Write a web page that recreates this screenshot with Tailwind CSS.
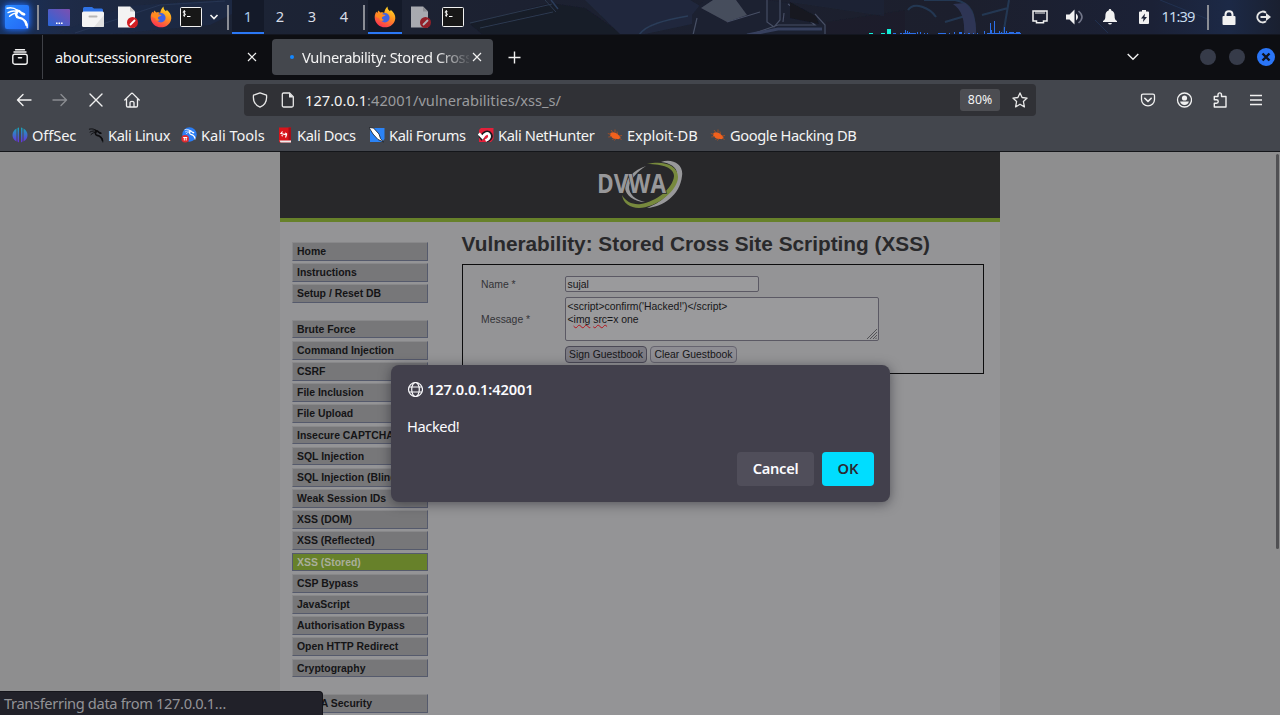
<!DOCTYPE html>
<html lang="en">
<head>
<meta charset="utf-8">
<title>Vulnerability: Stored Cross Site Scripting (XSS)</title>
<script src="https://cdn.jsdelivr.net/npm/@tailwindcss/browser@4"></script>
</head>
<body class="w-[1280px] h-[715px] overflow-hidden bg-[#8e8e8f] font-['Noto_Sans',sans-serif] text-[14.67px] text-[#f4f4f4]">
<svg class="absolute w-0 h-0">
  <defs>
    <linearGradient id="gk" x1="0" y1="0" x2="1" y2="1"><stop offset="0" stop-color="#2a8bff"/><stop offset="1" stop-color="#2467f5"/></linearGradient>
    <linearGradient id="gd" x1="0" y1="1" x2="1" y2="0"><stop offset="0" stop-color="#2a66d8"/><stop offset="1" stop-color="#7d4fb0"/></linearGradient>
    <linearGradient id="gf" x1="0.8" y1="0" x2="0.3" y2="1"><stop offset="0" stop-color="#ffe226"/><stop offset=".45" stop-color="#ff9421"/><stop offset="1" stop-color="#fb2f52"/></linearGradient>
    <linearGradient id="go" x1="0" y1="0" x2="0" y2="1"><stop offset="0" stop-color="#16a8b8"/><stop offset="1" stop-color="#6a2ee0"/></linearGradient>
    <symbol id="dragon" viewBox="0 0 24 24">
      <g fill="none" stroke="currentColor" stroke-linecap="round" stroke-linejoin="round">
        <path stroke-width="1.400" d="M2 3.200C6 2.200 9.500 3 12.500 5.200M3 7.600C6 5.800 9 5.600 12 6.400M4.500 11.300C7 8.800 9.500 8 12.200 8"/>
        <path stroke-width="2.400" d="M11.500 5.400C13.500 5.500 15 6.300 16.200 7.900L19.200 9.300M12.600 6.300C10.400 8.600 10.600 11.800 13.700 12.600C17.500 13.400 20.500 14.500 21.500 20"/>
        <path stroke-width="1.300" d="M19.500 9.500L17.500 9.600L16.500 8.700M20 15.500C22 17 22.300 19.500 22.200 22.500"/>
      </g>
    </symbol>
    <symbol id="fox" viewBox="0 0 22 22">
      <path fill="url(#gf)" d="M13.600.5C13.300 2.800 14.400 4 16 5.200C16.500 4.800 16.700 4.200 16.700 3.700C19.800 6.200 21.500 9 21.300 12.200C20.900 17.600 16.500 21.300 11 21.300C5.200 21.300 1 17 .7 11.700C.6 9.500 1.200 7.300 2.400 5.700L3.400 7L4.200 4.400L6.400 6.600C8 6 9.200 6.200 10.200 6.900C10.600 4.200 11.800 1.800 13.600.5Z"/>
      <circle cx="10.900" cy="11.800" r="4.700" fill="#3e62e6"/>
      <path fill="#ff8a1f" d="M1 9.800C3.300 6.900 6 6.700 8.500 8.200L11.600 8.900C11.200 10.300 8.500 10 8 11.500C7.500 13 9 13.800 10.300 13.800C8.200 16 5.500 14.500 5.200 12C3.800 11.700 2.200 11 1 9.800Z"/>
    </symbol>
    <symbol id="doc" viewBox="0 0 22 24">
      <path fill="#f3f3f3" d="M1 1.500H13L18 6.500V22.500H1Z"/><path fill="#c9c9c9" d="M13 1.500L18 6.500H13Z"/>
      <circle cx="15.500" cy="17.500" r="5.500" fill="#d21f24"/><path d="M13 20L18 15" stroke="#fff" stroke-width="1.800"/>
    </symbol>
    <symbol id="term" viewBox="0 0 22 20">
      <rect x=".5" y=".5" width="21" height="19" rx="1" fill="#171717" stroke="#f2f2f2"/>
      <path d="M5.500 4.700C4.500 3.800 3 4.200 3.200 5.300C3.400 6.300 5.400 6 5.400 7.500C5.400 8.600 3.800 8.700 3 8M4.300 3.200V9.800M7 9.500H10.500" fill="none" stroke="#fff" stroke-width="1"/>
    </symbol>
    <symbol id="bug" viewBox="0 0 16 16">
      <path fill="#f2611d" d="M3.500 6C5.500 4.500 8.500 5 11 7.500L13.500 10C13.500 11.500 12 12.500 10 12C7 12.500 4.500 10.500 3 8.300Z"/>
      <path fill="none" stroke="#b4501f" stroke-width=".8" d="M.8 6.500L4 7.500M1.300 10L5 9.500M4 3L6 5.500M8 2.500L8 5M10 4.500L10.500 7M15 8.500L12 9M14.500 12.500L12 11M7 11L5.500 13M9 11.500L7.500 13.500"/>
    </symbol>
  </defs>
</svg>

<!-- Desktop panel -->
<header class="relative h-[35px] bg-[#1c2233] overflow-hidden">
  <svg class="absolute inset-0" width="1280" height="35" viewBox="0 0 1280 35" fill="none">
    <defs>
      <linearGradient id="wall"><stop offset="0" stop-color="#17305c"/><stop offset=".05" stop-color="#1e2b48"/><stop offset=".16" stop-color="#1c2436"/><stop offset=".4" stop-color="#1c2131"/><stop offset=".75" stop-color="#1c1f2d"/><stop offset=".9" stop-color="#1b2136"/><stop offset=".96" stop-color="#1c2946"/><stop offset="1" stop-color="#1a2030"/></linearGradient>
      <filter id="soft" x="0" y="-1" width="1" height="3"><feGaussianBlur stdDeviation=".7"/></filter>
    </defs>
    <rect width="1280" height="35" fill="url(#wall)"/>
    <g filter="url(#soft)" opacity=".75">
      <path d="M60 32L128 6L220 0H260L210 25L100 35Z" fill="#1d2a47"/><path d="M75 33L160 5L225 1" stroke="#2b3b5c"/>
      <path d="M470 24L550 3L585 8L622 34H482Z" fill="#151a26"/><path d="M470 23L552 4M480 28L553 12M545 0L556 12" stroke="#33435a"/>
      <path d="M585 0L620 34H645L720 18L690 0Z" fill="#212b42"/><path d="M551 0L558 9M639 35C645 25 665 20 688 16" stroke="#304667" stroke-width="1.500"/>
      <path d="M692 15L704 0H765L790 3L812 15L826 25V35H692Z" fill="#1b2032"/>
      <path d="M701 8L713 0H736L747 15L727 22Z" fill="#555c6c"/><path d="M727 22L760 12M767 0V22L774 27L780 20V0M783 22L784 13M755 33L778 25H815L788 4M815 14L825 25V35M693 35L697 18" stroke="#565f76" stroke-width="1.200"/>
      <path d="M790 2L816 16L819 24L790 18Z" fill="#12151f"/><path d="M747 35L778 29H822" stroke="#3f4c6e" stroke-width="3"/>
      <path d="M826 22L905 10V35H826Z" fill="#1a1d2a"/><path d="M884 0H790V2L884 16Z" fill="#1e2a3e" opacity=".6"/>
      <path d="M908 10C914 1 930 8 936 17M924 0H955C972 3 976 15 974 35M945 22L972 14M982 15L1008 8M1009 0L1003 35" stroke="#27405f" stroke-width="2"/>
      <path d="M953 4C962 10 965 20 964 35H976C977 20 972 8 965 3Z" fill="#343e63"/><path d="M1095 20L1108 33M1160 0L1210 20" stroke="#223658"/>
    </g>
    <g shape-rendering="crispEdges">
      <path fill="#12f1d8" d="M869 33h4v1h-4zM881 33h4v1h-4zM887 29h4v5h-4z"/>
      <path fill="#2b6fe8" d="M893 33h3v1h-3zM900 33h2v1h-2zM903 33h13v1h-13zM905 30h1v4h-1zM907 31h1v3h-1zM909 32h1v2h-1zM917 32h1v2h-1zM920 32h1v2h-1zM924 33h1v1h-1zM927 33h1v1h-1zM938 33h8v1h-8zM949 33h1v1h-1zM954 32h1v2h-1zM959 32h3v2h-3zM964 33h1v1h-1zM968 33h2v1h-2zM973 33h1v1h-1zM977 33h1v1h-1zM984 31h1v3h-1zM987 33h34v1h-34zM990 23h1v11h-1zM991 30h1v4h-1zM994 21h1v13h-1zM999 31h1v3h-1zM1001 32h1v2h-1zM1004 27h1v7h-1zM1006 31h1v3h-1zM1009 32h5v2h-5zM1016 32h4v2h-4z"/>
    </g>
    <path d="M0 34.500H1280" stroke="#131620"/>
  </svg>
  <div class="relative h-[34px] flex items-center">
    <div class="w-[34px] flex justify-center"><div class="w-6 h-6 rounded-sm shadow-[0_0_6px_1px_#2070ff]"><svg width="24" height="24"><rect width="24" height="24" rx="2" fill="url(#gk)"/><use href="#dragon" width="24" height="24" color="#fff"/></svg></div></div>
    <div class="w-2 flex justify-center"><i class="w-0.5 h-[25px] bg-[#8a8d95]"></i></div>
    <div class="w-[34px] flex justify-center"><svg width="22" height="17" viewBox="0 0 22 17"><rect width="22" height="17" rx="1" fill="url(#gd)"/><path fill="#fff" d="M8 13.500h1.600v1.600H8zM10.500 13.500h1.600v1.600h-1.600zM13 13.500h1.600v1.600H13z"/></svg></div>
    <div class="w-[34px] flex justify-center"><svg width="22" height="20" viewBox="0 0 22 20"><path d="M1 5V1.500Q1 0 2.500 0H10L12 1.500H19.500Q21 1.500 21 3V6H1Z" fill="#2f72e4"/><rect y="4.500" width="22" height="15.500" rx="1.500" fill="#f4f4f4"/><path d="M22 8V19Q22 20 20.500 20H12Z" fill="#e0e0e0"/><rect x="6.500" y="8.500" width="9" height="2" rx="1" fill="#b5b5b5"/></svg></div>
    <div class="w-[34px] flex justify-center pl-0.5"><svg width="22" height="24"><use href="#doc"/></svg></div>
    <div class="w-[34px] flex justify-center"><svg width="22" height="22"><use href="#fox"/></svg></div>
    <div class="w-[26px] flex justify-center"><svg width="22" height="20"><use href="#term"/></svg></div>
    <div class="w-5 flex justify-center"><svg width="10" height="6" viewBox="0 0 10 6"><path d="M1.500 1L5 4.500L8.500 1" fill="none" stroke="#f4f4f4" stroke-width="1.600"/></svg></div>
    <div class="w-2 flex justify-center"><i class="w-0.5 h-[25px] bg-[#8a8d95]"></i></div>
    <div class="w-8 h-[34px] bg-[#141a29] border-b-2 border-[#2b78f5] flex items-center justify-center text-[#a8cbea]">1</div>
    <div class="w-8 text-center pb-0.5 text-[#d8dde6]">2</div>
    <div class="w-8 text-center pb-0.5 text-[#d8dde6]">3</div>
    <div class="w-8 text-center pb-0.5 text-[#d8dde6]">4</div>
    <div class="w-2 flex justify-center"><i class="w-0.5 h-[25px] bg-[#8a8d95]"></i></div>
    <div class="w-[34px] h-[34px] bg-[#141a29] border-b-2 border-[#2b78f5] pt-0.5 flex items-center justify-center"><svg width="22" height="22"><use href="#fox"/></svg></div>
    <div class="w-9 flex justify-center opacity-65 pl-0.5"><svg width="22" height="24"><use href="#doc"/></svg></div>
    <div class="w-[30px] flex justify-center"><svg width="22" height="20"><use href="#term"/></svg></div>
    <div class="grow"></div>
    <div class="w-[35px] flex justify-center"><svg width="16" height="14" viewBox="0 0 16 14"><path d="M1 1H15V11H11.500V12.800H4.500V11H1Z" fill="none" stroke="#f1f1f1" stroke-width="1.500"/><path d="M4 1V4M6 1V4M8 1V4M10 1V4M12 1V4" stroke="#f1f1f1"/></svg></div>
    <div class="w-9 flex justify-center"><svg width="18" height="16" viewBox="0 0 18 16"><path d="M0 5.500H3.500L8.500 .5V15.500L3.500 10.500H0Z" fill="#f1f1f1"/><path d="M10 4.500Q14 8 10 11.500Z" fill="#f1f1f1"/><path d="M12.500 2Q19.500 8 12.500 14" fill="none" stroke="#73778a" stroke-width="1.600"/></svg></div>
    <div class="w-[34px] flex justify-center"><svg width="14" height="16" viewBox="0 0 14 16"><path d="M7 0C8 0 8.300 .6 8.300 1.500C10.800 2.200 11.600 4.200 11.600 7C11.600 10 12.300 11 14 12V13H0V12C1.700 11 2.400 10 2.400 7C2.400 4.200 3.200 2.200 5.700 1.500C5.700 .6 6 0 7 0ZM5 14H9Q8.500 15.500 7 15.500T5 14Z" fill="#f1f1f1"/></svg></div>
    <div class="w-[34px] flex justify-center"><svg width="10" height="14" viewBox="0 0 10 14"><path d="M3 0H7V1.500H9Q10 1.500 10 2.500V13Q10 14 9 14H1Q0 14 0 13V2.500Q0 1.500 1 1.500H3Z" fill="#f1f1f1"/><path d="M6 3.500L2 8.500H4.500L4 12L8 7H5.500Z" fill="#1b2136"/></svg></div>
    <div class="w-[34px] pb-0.5 text-center text-[#c7dbee] tracking-[-0.9px]">11:39</div>
    <div class="w-[26px] flex justify-center"><i class="w-0.5 h-[25px] bg-[#8a8d95]"></i></div>
    <div class="w-[17px] flex justify-center -ml-px mr-px"><svg width="14" height="15" viewBox="0 0 14 15"><rect x=".5" y="6" width="13" height="9" rx="1" fill="#f1f1f1"/><path d="M3.500 7V4.500C3.500 0 10.500 0 10.500 4.500V7" fill="none" stroke="#f1f1f1" stroke-width="2"/></svg></div>
    <div class="w-[42px] pl-[9px] flex justify-center"><svg width="15" height="14" viewBox="0 0 15 14"><path d="M10 2.700A5.400 5.400 0 1 0 10 11.300" fill="none" stroke="#e6e6e6" stroke-width="2"/><path d="M4.500 6H10V3L15 7L10 11V8H4.500Z" fill="#e6e6e6"/></svg></div>
  </div>
</header>

<!-- Tab strip -->
<div class="h-[45px] bg-[#0d0e12] flex items-center tracking-[-0.4px]">
  <div class="w-[43px] h-[44px] self-start border-r border-[#3f4147] flex items-center justify-center pr-0.5"><svg width="16" height="16" viewBox="0 0 16 16" fill="none" stroke="#f1f1f1" stroke-width="1.400" stroke-linecap="round"><path d="M3.500 .8H12.500M2 3H14"/><rect x=".8" y="5.200" width="14.400" height="10" rx="2"/><path d="M6.500 8.700H9.500" stroke-width="1.600"/></svg></div>
  <div class="w-[229px] pl-3 pr-3 pb-[1px] flex items-center justify-between"><span>about:sessionrestore</span><svg width="16" height="16" viewBox="0 0 16 16" class="shrink-0"><path d="M4 4L12 12M12 4L4 12" stroke="#f1f1f1" stroke-width="1.200"/></svg></div>
  <div class="w-[221px] h-9 mb-[1px] rounded bg-[#44474d] flex items-center pl-[18px] pr-2">
    <i class="size-1 rounded-full bg-[#1487ff] mr-2 shrink-0"></i>
    <span class="w-[167px] overflow-hidden whitespace-nowrap [mask-image:linear-gradient(to_right,#000_80%,transparent_102%)]">Vulnerability: Stored Cross</span>
    <svg width="16" height="16" viewBox="0 0 16 16" class="shrink-0"><path d="M4 4L12 12M12 4L4 12" stroke="#f1f1f1" stroke-width="1.200"/></svg>
  </div>
  <svg class="ml-[15px]" width="13" height="13" viewBox="0 0 13 13"><path d="M6.500 .5V12.500M.5 6.500H12.500" stroke="#f1f1f1" stroke-width="1.400"/></svg>
  <div class="grow"></div>
  <svg class="mr-[61px] mb-0.5" width="12" height="8" viewBox="0 0 12 8"><path d="M.7 1L6 6.300L11.300 1" fill="none" stroke="#f1f1f1" stroke-width="1.400"/></svg>
  <div class="flex items-center gap-[13px] pr-[5px] mb-px"><i class="size-4 rounded-full bg-[#363b49]"></i><i class="size-4 rounded-full bg-[#363b49]"></i><i class="size-[18px] -ml-px rounded-full bg-[#2a75f6] flex items-center justify-center"><svg width="10" height="10" viewBox="0 0 10 10"><path d="M1.500 1.500L8.500 8.500M8.500 1.500L1.500 8.500" stroke="#10131c" stroke-width="2.400"/></svg></i></div>
</div>

<!-- Navigation bar -->
<div class="h-[41px] bg-[#43464d] flex items-center">
  <div class="flex items-center gap-5 pl-4 pb-px w-[244px] text-[#f1f1f1]">
    <svg width="16" height="16" viewBox="0 0 16 16" fill="none" stroke="currentColor" stroke-width="1.400" stroke-linecap="round" stroke-linejoin="round"><path d="M15 8H1.500M7 2.500L1.500 8L7 13.500"/></svg>
    <svg width="16" height="16" viewBox="0 0 16 16" fill="none" stroke="#8a8c91" stroke-width="1.400" stroke-linecap="round" stroke-linejoin="round"><path d="M1 8H14.500M9 2.500L14.500 8L9 13.500"/></svg>
    <svg width="16" height="16"><path d="M2 2L14 14M14 2L2 14" fill="none" stroke="currentColor" stroke-width="1.400" stroke-linecap="round"/></svg>
    <svg width="16" height="16" viewBox="0 0 16 16" fill="none" stroke="currentColor" stroke-width="1.300" stroke-linejoin="round" stroke-linecap="round"><path d="M.8 8L7.200 1.600Q8 .9 8.800 1.600L15.200 8M2.500 7V13.700Q2.500 15 3.800 15H12.200Q13.500 15 13.500 13.700V7M6 15V10.500Q6 9.300 8 9.300T10 10.500V15"/></svg>
  </div>
  <div class="w-[792px] h-8 mb-px rounded bg-[#303136] flex items-center pl-2 pr-2">
    <svg width="16" height="16" viewBox="0 0 16 16"><path d="M8 .9L14.500 3.200C15 7.500 13.500 12.800 8 15.200C2.500 12.800 1 7.500 1.500 3.200Z" fill="none" stroke="#e8e8e8" stroke-width="1.300" stroke-linejoin="round"/></svg>
    <svg class="ml-3" width="16" height="16" viewBox="0 0 16 16"><path d="M3.500 1H9.500L13.300 4.800V13.500Q13.300 15 11.800 15H3.800Q2.300 15 2.300 13.500V2.300Q2.300 1 3.500 1Z" fill="none" stroke="#e8e8e8" stroke-width="1.300"/><path d="M9 1L13.500 5.500H9Z" fill="#e8e8e8"/></svg>
    <span class="ml-[9px] pb-px text-[#f4f4f4]">127.0.0.1<span class="text-[#9a9b9e]">:42001/vulnerabilities/xss_s/</span></span>
    <div class="grow"></div>
    <span class="w-10 h-[22px] rounded-[3px] bg-[#4c4d52] text-[12.3px] leading-[22px] text-center">80%</span>
    <svg class="ml-3" width="16" height="16" viewBox="0 0 16 16"><path d="M8 .9L10.100 5.500L15.100 6.100L11.400 9.500L12.400 14.900L8 12.200L3.600 14.900L4.600 9.500L.9 6.100L5.900 5.500Z" fill="none" stroke="#e8e8e8" stroke-width="1.300" stroke-linejoin="round"/></svg>
  </div>
  <div class="grow flex items-center justify-end gap-5 pr-4 pb-px">
    <svg width="16" height="16" viewBox="0 0 16 16" fill="none" stroke="#f1f1f1" stroke-linecap="round" stroke-linejoin="round"><path stroke-width="1.300" d="M3 2.200H13Q14.500 2.200 14.500 3.700V7.500A6.500 6.300 0 0 1 1.500 7.500V3.700Q1.500 2.200 3 2.200Z"/><path stroke-width="1.600" d="M4.800 6.300L8 9.400L11.200 6.300"/></svg>
    <svg width="16" height="16" viewBox="0 0 16 16"><circle cx="8.500" cy="8" r="7" fill="none" stroke="#f1f1f1" stroke-width="1.300"/><circle cx="8.500" cy="6" r="2.600" fill="#f1f1f1"/><path d="M4.100 9.600H12.900Q12 13 8.500 13T4.100 9.600Z" fill="#f1f1f1"/></svg>
    <svg width="16" height="16" viewBox="0 0 16 16"><path d="M2.300 15V11.300H4.500A1.700 1.700 0 0 0 4.500 7.800H2.300V4.500H6V2.800A1.700 1.900 0 0 1 9.500 2.800V4.500H14V15Z" fill="none" stroke="#f1f1f1" stroke-width="1.400" stroke-linejoin="round"/></svg>
    <svg width="16" height="16" viewBox="0 0 16 16"><path d="M2 3.500H14M2 8H14M2 12.500H14" stroke="#f1f1f1" stroke-width="1.300"/></svg>
  </div>
</div>

<!-- Bookmarks -->
<div class="h-[31px] bg-[#43464d] border-b border-[#14161a] flex items-center pl-3 pb-0.5 whitespace-nowrap tracking-[-0.4px]">
  <div class="w-[76px] flex items-center gap-1"><svg width="16" height="16" viewBox="0 0 16 16"><path fill="url(#go)" d="M7 .5V15.500L5.500 14.500V1ZM4.500 1.500V14.500Q.5 12 .5 8T4.500 1.500ZM9 .5V15.500L10.500 14.500V1ZM11.500 1.500V14.500Q15.500 12 15.500 8T11.500 1.500Z"/></svg><span class="tracking-[-0.1px]">OffSec</span></div>
  <div class="w-[93px] flex items-center gap-1"><svg width="16" height="16" class="text-[#0c0c0e]"><use href="#dragon" width="16" height="16"/></svg>Kali Linux</div>
  <div class="w-[96px] flex items-center gap-1"><svg width="16" height="16" viewBox="0 0 16 16"><circle cx="8.500" cy="7.500" r="7.200" fill="#2b7df4"/><use href="#dragon" x="3" y="1" width="12" height="12" color="#fff"/><circle cx="4.200" cy="11.700" r="3.800" fill="#e02a2e"/><path d="M2.200 10.500H6.200M3.300 10.500V13.500M5.200 10.500V13.500" stroke="#fff"/></svg><span class="tracking-[-0.05px]">Kali Tools</span></div>
  <div class="w-[92px] flex items-center gap-1"><svg width="16" height="16" viewBox="0 0 16 16"><path d="M2 .5H14V15.500H3Q2 15.500 2 14Z" fill="#d9141b"/><path d="M2.500 13.500H14V15.500H3.500Z" fill="#eee"/><path d="M11.500 .5H14V13H11.500Z" fill="#a50f18"/><path d="M5.500 4.500L4 6.500L9.500 8L8.500 10.500M6 9L4.500 8.500M8 6L10 7" fill="none" stroke="#fff" stroke-width="1.200"/></svg>Kali Docs</div>
  <div class="w-[109px] flex items-center gap-1"><svg width="16" height="16" viewBox="0 0 16 16"><path d="M3 1H15.500V12L13 15H1V3Z" fill="#2b83f6"/><path d="M0 .5L4.500 1L10 7L11.500 11.500L14.500 15L9 12.500L4 7Z" fill="#fff" stroke="#15191f" stroke-width=".8"/></svg>Kali Forums</div>
  <div class="w-[129px] flex items-center gap-1"><svg width="16" height="16" viewBox="0 0 16 16"><path d="M3 1H15.500V12L13 15H1V3Z" fill="#e2203a"/><path d="M2 8.500L5 12.500M3.500 10.500C6 5 10.500 4 12.500 7.500C14 10.500 11 13 8.500 13.500" fill="none" stroke="#17191f" stroke-width="3.800"/><path d="M.8 6.500L4.500 10.500C7 6 10 5.500 11.200 7.800C12.500 10.500 10 12.500 7.500 13.500" fill="none" stroke="#fff" stroke-width="2.800"/></svg>Kali NetHunter</div>
  <div class="w-[103px] flex items-center gap-1"><svg width="16" height="16"><use href="#bug"/></svg><span class="tracking-[-0.1px]">Exploit-DB</span></div>
  <div class="flex items-center gap-1"><svg width="16" height="16"><use href="#bug"/></svg>Google Hacking DB</div>
</div>

<!-- Page -->
<main class="relative h-[563px] overflow-hidden font-['Liberation_Sans',Arial,sans-serif] text-[10.4px] text-[#252527]">
  <div class="w-[720px] h-full mx-auto bg-[#949496]">
    <div class="h-[70px] bg-[#28282a] border-b-4 border-[#67812a] flex justify-center pt-[7px]">
      <svg width="86" height="50" viewBox="0 0 86 50">
        <path d="M64 3C76 -1 87 6 85 17C83 36 66 48 50 49C68 42 80 28 80 15C80 8 73 4 64 3Z" fill="#98989a"/>
        <path d="M50 5C66 1 81 6 81 18C81 32 58 49 42 49C33 49 26 44 25 36C29 43 36 46 44 45C58 43 76 30 77 17C77 9 66 5 50 5Z" fill="#77893d"/>
        <path d="M49 7C37 11 28 20 28 28C28 36 37 43 48 43C38 41 32 35 32 28C33 20 41 12 49 7Z" fill="#98989a"/>
        <text x="0" y="34" font-family="Open Sans" font-weight="700" font-size="26" textLength="69" lengthAdjust="spacingAndGlyphs" fill="#98989a" stroke="#28282a" stroke-width="1.400" paint-order="stroke">DVWA</text>
      </svg>
    </div>
    <div class="flex">
      <nav class="w-[148px] pl-3 pt-5 flex flex-col gap-[16.4px] font-bold text-[10.45px] leading-[18.2px] text-[#141416]">
        <ul class="flex flex-col gap-[2.4px] *:h-[18.8px] *:border *:border-t-[#88888a] *:border-l-[#88888a] *:border-r-[#555a6c] *:border-b-[#555a6c] *:bg-[#777779] *:pl-1 *:whitespace-nowrap">
          <li>Home</li><li>Instructions</li><li>Setup / Reset DB</li>
        </ul>
        <ul class="flex flex-col gap-[2.4px] *:h-[18.8px] *:border *:border-t-[#88888a] *:border-l-[#88888a] *:border-r-[#555a6c] *:border-b-[#555a6c] *:bg-[#777779] *:pl-1 *:whitespace-nowrap">
          <li>Brute Force</li><li>Command Injection</li><li>CSRF</li><li>File Inclusion</li><li>File Upload</li><li>Insecure CAPTCHA</li><li>SQL Injection</li><li>SQL Injection (Blind)</li><li>Weak Session IDs</li><li>XSS (DOM)</li><li>XSS (Reflected)</li>
          <li class="bg-[#67812a]! border-[#555a6c]! text-[#a9ae9b]">XSS (Stored)</li>
          <li>CSP Bypass</li><li>JavaScript</li><li>Authorisation Bypass</li><li>Open HTTP Redirect</li><li>Cryptography</li>
        </ul>
        <ul class="flex flex-col *:h-[18.8px] *:border *:border-t-[#88888a] *:border-l-[#88888a] *:border-r-[#555a6c] *:border-b-[#555a6c] *:bg-[#777779] *:pl-1 *:whitespace-nowrap">
          <li>DVWA Security</li>
        </ul>
      </nav>
      <section class="pl-[34px] pt-2.5">
        <h1 class="text-[20.8px] leading-6 font-bold whitespace-nowrap text-[#29292b] -ml-[0.4px]">Vulnerability: Stored Cross Site Scripting (XSS)</h1>
        <div class="mt-2 w-[522px] h-[110px] border border-[#0c0c0d] pl-[18px] pt-[11px] flex flex-col items-start text-[#333336]">
          <div class="flex items-center h-4"><span class="w-[84px] pt-px">Name *</span><span class="w-[194px] h-4 border border-[#5b5964] rounded-[2px] bg-[#9a9a9c] px-[1.5px] leading-[15px] text-[#161618]">sujal</span></div>
          <div class="flex items-center h-11 mt-[5px]"><span class="w-[84px] pt-0.5">Message *</span>
            <div class="relative w-[314px] h-11 border border-[#5b5964] rounded-[2px] bg-[#9a9a9c] px-[1.5px] pt-[2px] leading-[13px] text-[#161618]">&lt;script&gt;confirm('Hacked!')&lt;/script&gt;<br>&lt;<span class="underline decoration-wavy decoration-[#b3141c] decoration-[1.3px] underline-offset-1 [text-decoration-skip-ink:none]">img</span> <span class="underline decoration-wavy decoration-[#b3141c] decoration-[1.3px] underline-offset-1 [text-decoration-skip-ink:none]">src</span>=x one
              <svg class="absolute right-[1px] bottom-[1px]" width="10" height="10" viewBox="0 0 10 10"><path d="M0 10L10 0M3 10L10 3M6 10L10 6M8.500 10L10 8.500" stroke="#4a4a4e" stroke-width=".9"/></svg>
            </div>
          </div>
          <div class="flex gap-[3px] mt-[5px] pl-[84px] text-[#161618] leading-[15px] text-center"><span class="w-[82px] h-[17px] border border-[#4b4956] rounded-[4px] bg-[#7d7c84]">Sign Guestbook</span><span class="w-[87px] h-[17px] border border-[#66646f] rounded-[4px] bg-[#8e8d93]">Clear Guestbook</span></div>
        </div>
      </section>
    </div>
  </div>
  <div class="absolute right-[1px] top-[2px] w-[3px] h-[395px] rounded bg-[#505053]"></div>
</main>

<!-- Confirm dialog -->
<div class="absolute left-[391px] top-[365px] w-[499px] h-[137px] rounded-lg bg-[#42404c] shadow-[0_2px_12px_rgba(20,20,30,0.5)] p-4 flex flex-col text-[#fbfbfe]">
  <div class="flex items-center gap-1 h-4 font-semibold tracking-[-0.12px]"><svg width="16" height="16" viewBox="0 0 16 16" fill="none" stroke="#fbfbfe" stroke-width="1.200"><circle cx="8.500" cy="8.500" r="7"/><ellipse cx="8.500" cy="8.500" rx="3.800" ry="7"/><path d="M2 6H15M2 11H15"/></svg>127.0.0.1:42001</div>
  <div class="mt-[19px] leading-5 tracking-[-0.4px]">Hacked!</div>
  <div class="mt-auto flex justify-end gap-2 font-semibold leading-[32px] text-center"><span class="w-[77px] h-[34px] rounded bg-[#504e5a] tracking-[-0.3px]">Cancel</span><span class="w-[52px] h-[34px] rounded bg-[#00ddff] text-[#2b2a33]">OK</span></div>
</div>

<!-- Load status -->
<div class="absolute left-0 top-[691px] w-[323px] h-6 rounded-tr bg-[#212129] border-t border-r border-[#15151b] pl-1 leading-[22px] tracking-[-0.36px] text-[#939397]">Transferring data from 127.0.0.1…</div>
</body>
</html>
